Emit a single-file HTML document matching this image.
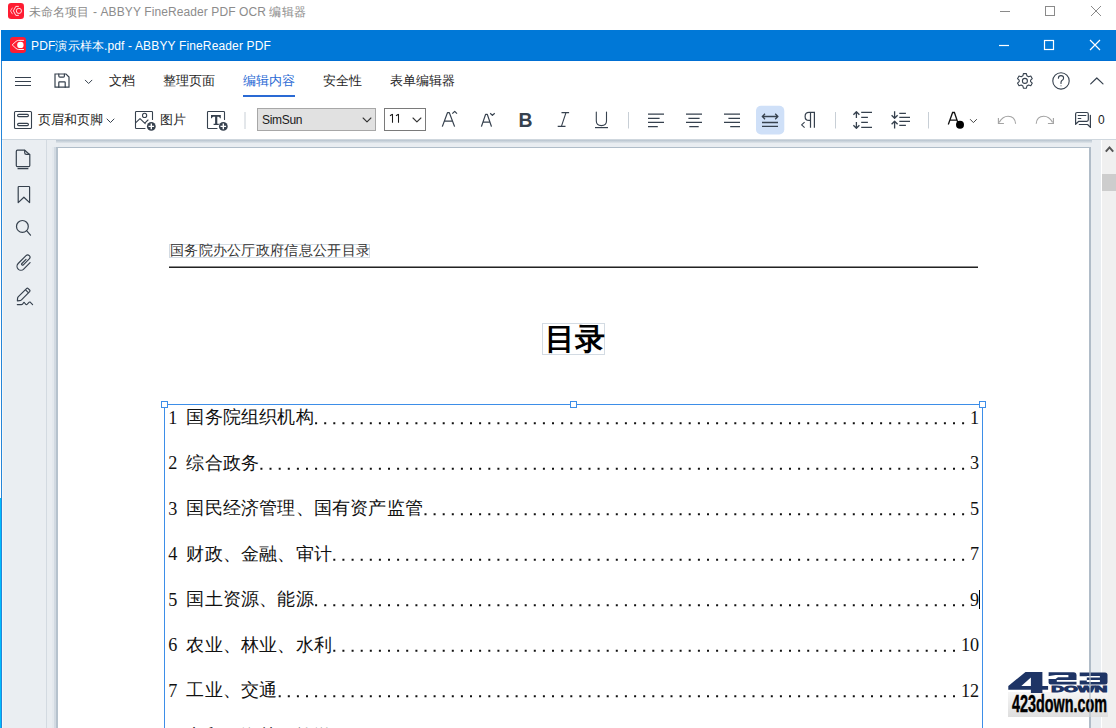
<!DOCTYPE html>
<html><head><meta charset="utf-8">
<style>
*{margin:0;padding:0;box-sizing:border-box}
html,body{width:1116px;height:728px;overflow:hidden;background:#fff;font-family:"Liberation Sans",sans-serif;}
.a{position:absolute}
.t{position:absolute;white-space:nowrap;line-height:1}
#ov{position:absolute;left:0;top:0;overflow:visible}
.menu{font-size:13px;color:#262626;top:74px}
.tb{font-size:13px;color:#262626;top:113px}
.doc{font-family:"Liberation Serif",serif;color:#111}
.dg{font-size:18.2px;color:#111}
.cj{font-size:18px;letter-spacing:0.2px;color:#111}
</style></head><body>

<!-- backgrounds -->
<div class="a" style="left:1px;top:30px;width:1115px;height:31px;background:#0078d7"></div>
<div class="a" style="left:1px;top:60px;width:1115px;height:1px;background:#006fd3"></div><div class="a" style="left:1px;top:61px;width:1px;height:667px;background:#2585d8"></div>
<div class="a" style="left:2px;top:139px;width:1114px;height:1px;background:#cfd7de"></div>
<div class="a" style="left:2px;top:140px;width:44px;height:588px;background:#eaeef2"></div><div class="a" style="left:2px;top:140px;width:1px;height:588px;background:#f6f7f8"></div><div class="a" style="left:0;top:498px;width:1px;height:230px;background:#00bdfd"></div>
<div class="a" style="left:46px;top:140px;width:1px;height:588px;background:#d3dae1"></div>
<div class="a" style="left:47px;top:140px;width:1055px;height:588px;background:#e9edf1"></div>
<div class="a" style="left:1101px;top:140px;width:1px;height:588px;background:#fff"></div><div class="a" style="left:1102px;top:140px;width:14px;height:588px;background:#f0f0f0"></div>
<div class="a" style="left:1102px;top:174px;width:14px;height:17px;background:#cdcdcd"></div>
<!-- page + shadow -->
<div class="a" style="left:56px;top:140px;width:1036px;height:3px;background:linear-gradient(#b8c4cf,#dfe5ea)"></div>
<div class="a" style="left:52px;top:147px;width:2px;height:581px;background:#e4e9ee"></div><div class="a" style="left:54px;top:147px;width:2px;height:581px;background:#d2dae2"></div>
<div class="a" style="left:56px;top:147px;width:1035px;height:600px;background:#fff;border-left:2px solid #b6c2cd;border-top:1px solid #b0bdc9;border-right:2px solid #b0bcc8"></div>

<!-- title texts -->
<div class="t" style="left:29px;top:6px;font-size:12px;color:#8c8c8c;letter-spacing:0.1px">未命名项目 - ABBYY FineReader PDF OCR 编辑器</div>
<div class="t" style="left:31px;top:40px;font-size:12px;color:#fff;letter-spacing:0.14px">PDF演示样本.pdf - ABBYY FineReader PDF</div>

<!-- menu -->
<div class="t menu" style="left:109px">文档</div>
<div class="t menu" style="left:163px">整理页面</div>
<div class="t menu" style="left:243px;color:#2a6ad4">编辑内容</div>
<div class="a" style="left:243px;top:95px;width:52px;height:2px;background:#2a6ad4"></div>
<div class="t menu" style="left:323px">安全性</div>
<div class="t menu" style="left:390px">表单编辑器</div>

<!-- toolbar -->
<div class="t tb" style="left:38px">页眉和页脚</div>
<div class="t tb" style="left:160px">图片</div>
<div class="a" style="left:257px;top:108px;width:119px;height:23px;background:#e1e1e1;border:1px solid #a7a7a7"></div>
<div class="t" style="left:262px;top:114px;font-size:12px;color:#1a1a1a;letter-spacing:-0.3px">SimSun</div>
<div class="a" style="left:384px;top:108px;width:42px;height:23px;background:#fff;border:1px solid #7a7a7a"></div>
<svg class="a" style="left:0;top:0" width="1116" height="728"><path d="M392.5 114 V122.8 M390 115.8 L392.5 114.2 M398.5 114 V122.8 M396 115.8 L398.5 114.2" stroke="#1a1a1a" stroke-width="1.05" fill="none"/></svg>
<div class="t" style="left:1098px;top:114px;font-size:12px;color:#1a1a1a">0</div>


<!-- document content -->
<div class="t doc" style="left:169px;top:244px;width:201px;height:14px;border:1px solid #d3dbe3"></div>
<div class="t doc" style="left:170px;top:244px;font-size:14px;color:#333;letter-spacing:0.3px">国务院办公厅政府信息公开目录</div>
<div class="a" style="left:169px;top:266px;width:809px;height:1px;background:#8c8c8c"></div><div class="a" style="left:169px;top:267px;width:809px;height:1px;background:#222"></div>
<div class="a" style="left:542px;top:323px;width:63px;height:32px;border:1px solid #d3dbe3"></div>
<div class="t doc" style="left:545px;top:324px;font-size:30px;font-weight:bold;color:#000">目录</div>
<!-- selection -->
<div class="a" style="left:164px;top:404px;width:819px;height:330px;border:1px solid #3d8ee8;border-bottom:none"></div>
<div class="a" style="left:161px;top:401px;width:7px;height:7px;border:1px solid #3d8ee8;background:#fff"></div>
<div class="a" style="left:570px;top:401px;width:7px;height:7px;border:1px solid #3d8ee8;background:#fff"></div>
<div class="a" style="left:979px;top:401px;width:7px;height:7px;border:1px solid #3d8ee8;background:#fff"></div>
<div class="a" style="left:979px;top:590px;width:1px;height:19px;background:#000"></div>
<div class="t doc dg" style="left:168.2px;top:408.8px">1</div>
<div class="t doc cj" style="left:186.4px;top:408.0px">国务院组织机构</div>
<div class="t doc dg" style="left:970.1px;top:408.8px">1</div>
<div class="t doc dg" style="left:168.2px;top:454.3px">2</div>
<div class="t doc cj" style="left:186.4px;top:453.5px">综合政务</div>
<div class="t doc dg" style="left:970.1px;top:454.3px">3</div>
<div class="t doc dg" style="left:168.2px;top:499.8px">3</div>
<div class="t doc cj" style="left:186.4px;top:499.0px">国民经济管理、国有资产监管</div>
<div class="t doc dg" style="left:970.1px;top:499.8px">5</div>
<div class="t doc dg" style="left:168.2px;top:545.3px">4</div>
<div class="t doc cj" style="left:186.4px;top:544.5px">财政、金融、审计</div>
<div class="t doc dg" style="left:970.1px;top:545.3px">7</div>
<div class="t doc dg" style="left:168.2px;top:590.8px">5</div>
<div class="t doc cj" style="left:186.4px;top:590.0px">国土资源、能源</div>
<div class="t doc dg" style="left:970.1px;top:590.8px">9</div>
<div class="t doc dg" style="left:168.2px;top:636.3px">6</div>
<div class="t doc cj" style="left:186.4px;top:635.5px">农业、林业、水利</div>
<div class="t doc dg" style="left:961.0px;top:636.3px">10</div>
<div class="t doc dg" style="left:168.2px;top:681.8px">7</div>
<div class="t doc cj" style="left:186.4px;top:681.0px">工业、交通</div>
<div class="t doc dg" style="left:961.0px;top:681.8px">12</div>
<div class="t doc dg" style="left:168.2px;top:727.3px">8</div>
<div class="t doc cj" style="left:186.4px;top:726.5px">商贸、海关、旅游</div>
<div class="t doc dg" style="left:961.0px;top:727.3px">15</div>
<svg class="a" style="left:0;top:0" width="1116" height="728"><path fill="#111" d="M315.1 422.2h2v2h-2zM324.2 422.2h2v2h-2zM333.3 422.2h2v2h-2zM342.4 422.2h2v2h-2zM351.6 422.2h2v2h-2zM360.7 422.2h2v2h-2zM369.8 422.2h2v2h-2zM378.9 422.2h2v2h-2zM388.0 422.2h2v2h-2zM397.1 422.2h2v2h-2zM406.2 422.2h2v2h-2zM415.4 422.2h2v2h-2zM424.5 422.2h2v2h-2zM433.6 422.2h2v2h-2zM442.7 422.2h2v2h-2zM451.8 422.2h2v2h-2zM460.9 422.2h2v2h-2zM470.0 422.2h2v2h-2zM479.1 422.2h2v2h-2zM488.3 422.2h2v2h-2zM497.4 422.2h2v2h-2zM506.5 422.2h2v2h-2zM515.6 422.2h2v2h-2zM524.7 422.2h2v2h-2zM533.8 422.2h2v2h-2zM542.9 422.2h2v2h-2zM552.0 422.2h2v2h-2zM561.2 422.2h2v2h-2zM570.3 422.2h2v2h-2zM579.4 422.2h2v2h-2zM588.5 422.2h2v2h-2zM597.6 422.2h2v2h-2zM606.7 422.2h2v2h-2zM615.8 422.2h2v2h-2zM624.9 422.2h2v2h-2zM634.1 422.2h2v2h-2zM643.2 422.2h2v2h-2zM652.3 422.2h2v2h-2zM661.4 422.2h2v2h-2zM670.5 422.2h2v2h-2zM679.6 422.2h2v2h-2zM688.7 422.2h2v2h-2zM697.9 422.2h2v2h-2zM707.0 422.2h2v2h-2zM716.1 422.2h2v2h-2zM725.2 422.2h2v2h-2zM734.3 422.2h2v2h-2zM743.4 422.2h2v2h-2zM752.5 422.2h2v2h-2zM761.6 422.2h2v2h-2zM770.8 422.2h2v2h-2zM779.9 422.2h2v2h-2zM789.0 422.2h2v2h-2zM798.1 422.2h2v2h-2zM807.2 422.2h2v2h-2zM816.3 422.2h2v2h-2zM825.4 422.2h2v2h-2zM834.5 422.2h2v2h-2zM843.7 422.2h2v2h-2zM852.8 422.2h2v2h-2zM861.9 422.2h2v2h-2zM871.0 422.2h2v2h-2zM880.1 422.2h2v2h-2zM889.2 422.2h2v2h-2zM898.3 422.2h2v2h-2zM907.5 422.2h2v2h-2zM916.6 422.2h2v2h-2zM925.7 422.2h2v2h-2zM934.8 422.2h2v2h-2zM943.9 422.2h2v2h-2zM953.0 422.2h2v2h-2zM962.1 422.2h2v2h-2zM260.4 467.7h2v2h-2zM269.5 467.7h2v2h-2zM278.7 467.7h2v2h-2zM287.8 467.7h2v2h-2zM296.9 467.7h2v2h-2zM306.0 467.7h2v2h-2zM315.1 467.7h2v2h-2zM324.2 467.7h2v2h-2zM333.3 467.7h2v2h-2zM342.4 467.7h2v2h-2zM351.6 467.7h2v2h-2zM360.7 467.7h2v2h-2zM369.8 467.7h2v2h-2zM378.9 467.7h2v2h-2zM388.0 467.7h2v2h-2zM397.1 467.7h2v2h-2zM406.2 467.7h2v2h-2zM415.4 467.7h2v2h-2zM424.5 467.7h2v2h-2zM433.6 467.7h2v2h-2zM442.7 467.7h2v2h-2zM451.8 467.7h2v2h-2zM460.9 467.7h2v2h-2zM470.0 467.7h2v2h-2zM479.1 467.7h2v2h-2zM488.3 467.7h2v2h-2zM497.4 467.7h2v2h-2zM506.5 467.7h2v2h-2zM515.6 467.7h2v2h-2zM524.7 467.7h2v2h-2zM533.8 467.7h2v2h-2zM542.9 467.7h2v2h-2zM552.0 467.7h2v2h-2zM561.2 467.7h2v2h-2zM570.3 467.7h2v2h-2zM579.4 467.7h2v2h-2zM588.5 467.7h2v2h-2zM597.6 467.7h2v2h-2zM606.7 467.7h2v2h-2zM615.8 467.7h2v2h-2zM624.9 467.7h2v2h-2zM634.1 467.7h2v2h-2zM643.2 467.7h2v2h-2zM652.3 467.7h2v2h-2zM661.4 467.7h2v2h-2zM670.5 467.7h2v2h-2zM679.6 467.7h2v2h-2zM688.7 467.7h2v2h-2zM697.9 467.7h2v2h-2zM707.0 467.7h2v2h-2zM716.1 467.7h2v2h-2zM725.2 467.7h2v2h-2zM734.3 467.7h2v2h-2zM743.4 467.7h2v2h-2zM752.5 467.7h2v2h-2zM761.6 467.7h2v2h-2zM770.8 467.7h2v2h-2zM779.9 467.7h2v2h-2zM789.0 467.7h2v2h-2zM798.1 467.7h2v2h-2zM807.2 467.7h2v2h-2zM816.3 467.7h2v2h-2zM825.4 467.7h2v2h-2zM834.5 467.7h2v2h-2zM843.7 467.7h2v2h-2zM852.8 467.7h2v2h-2zM861.9 467.7h2v2h-2zM871.0 467.7h2v2h-2zM880.1 467.7h2v2h-2zM889.2 467.7h2v2h-2zM898.3 467.7h2v2h-2zM907.5 467.7h2v2h-2zM916.6 467.7h2v2h-2zM925.7 467.7h2v2h-2zM934.8 467.7h2v2h-2zM943.9 467.7h2v2h-2zM953.0 467.7h2v2h-2zM962.1 467.7h2v2h-2zM424.5 513.2h2v2h-2zM433.6 513.2h2v2h-2zM442.7 513.2h2v2h-2zM451.8 513.2h2v2h-2zM460.9 513.2h2v2h-2zM470.0 513.2h2v2h-2zM479.1 513.2h2v2h-2zM488.3 513.2h2v2h-2zM497.4 513.2h2v2h-2zM506.5 513.2h2v2h-2zM515.6 513.2h2v2h-2zM524.7 513.2h2v2h-2zM533.8 513.2h2v2h-2zM542.9 513.2h2v2h-2zM552.0 513.2h2v2h-2zM561.2 513.2h2v2h-2zM570.3 513.2h2v2h-2zM579.4 513.2h2v2h-2zM588.5 513.2h2v2h-2zM597.6 513.2h2v2h-2zM606.7 513.2h2v2h-2zM615.8 513.2h2v2h-2zM624.9 513.2h2v2h-2zM634.1 513.2h2v2h-2zM643.2 513.2h2v2h-2zM652.3 513.2h2v2h-2zM661.4 513.2h2v2h-2zM670.5 513.2h2v2h-2zM679.6 513.2h2v2h-2zM688.7 513.2h2v2h-2zM697.9 513.2h2v2h-2zM707.0 513.2h2v2h-2zM716.1 513.2h2v2h-2zM725.2 513.2h2v2h-2zM734.3 513.2h2v2h-2zM743.4 513.2h2v2h-2zM752.5 513.2h2v2h-2zM761.6 513.2h2v2h-2zM770.8 513.2h2v2h-2zM779.9 513.2h2v2h-2zM789.0 513.2h2v2h-2zM798.1 513.2h2v2h-2zM807.2 513.2h2v2h-2zM816.3 513.2h2v2h-2zM825.4 513.2h2v2h-2zM834.5 513.2h2v2h-2zM843.7 513.2h2v2h-2zM852.8 513.2h2v2h-2zM861.9 513.2h2v2h-2zM871.0 513.2h2v2h-2zM880.1 513.2h2v2h-2zM889.2 513.2h2v2h-2zM898.3 513.2h2v2h-2zM907.5 513.2h2v2h-2zM916.6 513.2h2v2h-2zM925.7 513.2h2v2h-2zM934.8 513.2h2v2h-2zM943.9 513.2h2v2h-2zM953.0 513.2h2v2h-2zM962.1 513.2h2v2h-2zM333.3 558.7h2v2h-2zM342.4 558.7h2v2h-2zM351.6 558.7h2v2h-2zM360.7 558.7h2v2h-2zM369.8 558.7h2v2h-2zM378.9 558.7h2v2h-2zM388.0 558.7h2v2h-2zM397.1 558.7h2v2h-2zM406.2 558.7h2v2h-2zM415.4 558.7h2v2h-2zM424.5 558.7h2v2h-2zM433.6 558.7h2v2h-2zM442.7 558.7h2v2h-2zM451.8 558.7h2v2h-2zM460.9 558.7h2v2h-2zM470.0 558.7h2v2h-2zM479.1 558.7h2v2h-2zM488.3 558.7h2v2h-2zM497.4 558.7h2v2h-2zM506.5 558.7h2v2h-2zM515.6 558.7h2v2h-2zM524.7 558.7h2v2h-2zM533.8 558.7h2v2h-2zM542.9 558.7h2v2h-2zM552.0 558.7h2v2h-2zM561.2 558.7h2v2h-2zM570.3 558.7h2v2h-2zM579.4 558.7h2v2h-2zM588.5 558.7h2v2h-2zM597.6 558.7h2v2h-2zM606.7 558.7h2v2h-2zM615.8 558.7h2v2h-2zM624.9 558.7h2v2h-2zM634.1 558.7h2v2h-2zM643.2 558.7h2v2h-2zM652.3 558.7h2v2h-2zM661.4 558.7h2v2h-2zM670.5 558.7h2v2h-2zM679.6 558.7h2v2h-2zM688.7 558.7h2v2h-2zM697.9 558.7h2v2h-2zM707.0 558.7h2v2h-2zM716.1 558.7h2v2h-2zM725.2 558.7h2v2h-2zM734.3 558.7h2v2h-2zM743.4 558.7h2v2h-2zM752.5 558.7h2v2h-2zM761.6 558.7h2v2h-2zM770.8 558.7h2v2h-2zM779.9 558.7h2v2h-2zM789.0 558.7h2v2h-2zM798.1 558.7h2v2h-2zM807.2 558.7h2v2h-2zM816.3 558.7h2v2h-2zM825.4 558.7h2v2h-2zM834.5 558.7h2v2h-2zM843.7 558.7h2v2h-2zM852.8 558.7h2v2h-2zM861.9 558.7h2v2h-2zM871.0 558.7h2v2h-2zM880.1 558.7h2v2h-2zM889.2 558.7h2v2h-2zM898.3 558.7h2v2h-2zM907.5 558.7h2v2h-2zM916.6 558.7h2v2h-2zM925.7 558.7h2v2h-2zM934.8 558.7h2v2h-2zM943.9 558.7h2v2h-2zM953.0 558.7h2v2h-2zM962.1 558.7h2v2h-2zM315.1 604.2h2v2h-2zM324.2 604.2h2v2h-2zM333.3 604.2h2v2h-2zM342.4 604.2h2v2h-2zM351.6 604.2h2v2h-2zM360.7 604.2h2v2h-2zM369.8 604.2h2v2h-2zM378.9 604.2h2v2h-2zM388.0 604.2h2v2h-2zM397.1 604.2h2v2h-2zM406.2 604.2h2v2h-2zM415.4 604.2h2v2h-2zM424.5 604.2h2v2h-2zM433.6 604.2h2v2h-2zM442.7 604.2h2v2h-2zM451.8 604.2h2v2h-2zM460.9 604.2h2v2h-2zM470.0 604.2h2v2h-2zM479.1 604.2h2v2h-2zM488.3 604.2h2v2h-2zM497.4 604.2h2v2h-2zM506.5 604.2h2v2h-2zM515.6 604.2h2v2h-2zM524.7 604.2h2v2h-2zM533.8 604.2h2v2h-2zM542.9 604.2h2v2h-2zM552.0 604.2h2v2h-2zM561.2 604.2h2v2h-2zM570.3 604.2h2v2h-2zM579.4 604.2h2v2h-2zM588.5 604.2h2v2h-2zM597.6 604.2h2v2h-2zM606.7 604.2h2v2h-2zM615.8 604.2h2v2h-2zM624.9 604.2h2v2h-2zM634.1 604.2h2v2h-2zM643.2 604.2h2v2h-2zM652.3 604.2h2v2h-2zM661.4 604.2h2v2h-2zM670.5 604.2h2v2h-2zM679.6 604.2h2v2h-2zM688.7 604.2h2v2h-2zM697.9 604.2h2v2h-2zM707.0 604.2h2v2h-2zM716.1 604.2h2v2h-2zM725.2 604.2h2v2h-2zM734.3 604.2h2v2h-2zM743.4 604.2h2v2h-2zM752.5 604.2h2v2h-2zM761.6 604.2h2v2h-2zM770.8 604.2h2v2h-2zM779.9 604.2h2v2h-2zM789.0 604.2h2v2h-2zM798.1 604.2h2v2h-2zM807.2 604.2h2v2h-2zM816.3 604.2h2v2h-2zM825.4 604.2h2v2h-2zM834.5 604.2h2v2h-2zM843.7 604.2h2v2h-2zM852.8 604.2h2v2h-2zM861.9 604.2h2v2h-2zM871.0 604.2h2v2h-2zM880.1 604.2h2v2h-2zM889.2 604.2h2v2h-2zM898.3 604.2h2v2h-2zM907.5 604.2h2v2h-2zM916.6 604.2h2v2h-2zM925.7 604.2h2v2h-2zM934.8 604.2h2v2h-2zM943.9 604.2h2v2h-2zM953.0 604.2h2v2h-2zM962.1 604.2h2v2h-2zM333.3 649.7h2v2h-2zM342.4 649.7h2v2h-2zM351.6 649.7h2v2h-2zM360.7 649.7h2v2h-2zM369.8 649.7h2v2h-2zM378.9 649.7h2v2h-2zM388.0 649.7h2v2h-2zM397.1 649.7h2v2h-2zM406.2 649.7h2v2h-2zM415.4 649.7h2v2h-2zM424.5 649.7h2v2h-2zM433.6 649.7h2v2h-2zM442.7 649.7h2v2h-2zM451.8 649.7h2v2h-2zM460.9 649.7h2v2h-2zM470.0 649.7h2v2h-2zM479.1 649.7h2v2h-2zM488.3 649.7h2v2h-2zM497.4 649.7h2v2h-2zM506.5 649.7h2v2h-2zM515.6 649.7h2v2h-2zM524.7 649.7h2v2h-2zM533.8 649.7h2v2h-2zM542.9 649.7h2v2h-2zM552.0 649.7h2v2h-2zM561.2 649.7h2v2h-2zM570.3 649.7h2v2h-2zM579.4 649.7h2v2h-2zM588.5 649.7h2v2h-2zM597.6 649.7h2v2h-2zM606.7 649.7h2v2h-2zM615.8 649.7h2v2h-2zM624.9 649.7h2v2h-2zM634.1 649.7h2v2h-2zM643.2 649.7h2v2h-2zM652.3 649.7h2v2h-2zM661.4 649.7h2v2h-2zM670.5 649.7h2v2h-2zM679.6 649.7h2v2h-2zM688.7 649.7h2v2h-2zM697.9 649.7h2v2h-2zM707.0 649.7h2v2h-2zM716.1 649.7h2v2h-2zM725.2 649.7h2v2h-2zM734.3 649.7h2v2h-2zM743.4 649.7h2v2h-2zM752.5 649.7h2v2h-2zM761.6 649.7h2v2h-2zM770.8 649.7h2v2h-2zM779.9 649.7h2v2h-2zM789.0 649.7h2v2h-2zM798.1 649.7h2v2h-2zM807.2 649.7h2v2h-2zM816.3 649.7h2v2h-2zM825.4 649.7h2v2h-2zM834.5 649.7h2v2h-2zM843.7 649.7h2v2h-2zM852.8 649.7h2v2h-2zM861.9 649.7h2v2h-2zM871.0 649.7h2v2h-2zM880.1 649.7h2v2h-2zM889.2 649.7h2v2h-2zM898.3 649.7h2v2h-2zM907.5 649.7h2v2h-2zM916.6 649.7h2v2h-2zM925.7 649.7h2v2h-2zM934.8 649.7h2v2h-2zM943.9 649.7h2v2h-2zM953.0 649.7h2v2h-2zM278.7 695.2h2v2h-2zM287.8 695.2h2v2h-2zM296.9 695.2h2v2h-2zM306.0 695.2h2v2h-2zM315.1 695.2h2v2h-2zM324.2 695.2h2v2h-2zM333.3 695.2h2v2h-2zM342.4 695.2h2v2h-2zM351.6 695.2h2v2h-2zM360.7 695.2h2v2h-2zM369.8 695.2h2v2h-2zM378.9 695.2h2v2h-2zM388.0 695.2h2v2h-2zM397.1 695.2h2v2h-2zM406.2 695.2h2v2h-2zM415.4 695.2h2v2h-2zM424.5 695.2h2v2h-2zM433.6 695.2h2v2h-2zM442.7 695.2h2v2h-2zM451.8 695.2h2v2h-2zM460.9 695.2h2v2h-2zM470.0 695.2h2v2h-2zM479.1 695.2h2v2h-2zM488.3 695.2h2v2h-2zM497.4 695.2h2v2h-2zM506.5 695.2h2v2h-2zM515.6 695.2h2v2h-2zM524.7 695.2h2v2h-2zM533.8 695.2h2v2h-2zM542.9 695.2h2v2h-2zM552.0 695.2h2v2h-2zM561.2 695.2h2v2h-2zM570.3 695.2h2v2h-2zM579.4 695.2h2v2h-2zM588.5 695.2h2v2h-2zM597.6 695.2h2v2h-2zM606.7 695.2h2v2h-2zM615.8 695.2h2v2h-2zM624.9 695.2h2v2h-2zM634.1 695.2h2v2h-2zM643.2 695.2h2v2h-2zM652.3 695.2h2v2h-2zM661.4 695.2h2v2h-2zM670.5 695.2h2v2h-2zM679.6 695.2h2v2h-2zM688.7 695.2h2v2h-2zM697.9 695.2h2v2h-2zM707.0 695.2h2v2h-2zM716.1 695.2h2v2h-2zM725.2 695.2h2v2h-2zM734.3 695.2h2v2h-2zM743.4 695.2h2v2h-2zM752.5 695.2h2v2h-2zM761.6 695.2h2v2h-2zM770.8 695.2h2v2h-2zM779.9 695.2h2v2h-2zM789.0 695.2h2v2h-2zM798.1 695.2h2v2h-2zM807.2 695.2h2v2h-2zM816.3 695.2h2v2h-2zM825.4 695.2h2v2h-2zM834.5 695.2h2v2h-2zM843.7 695.2h2v2h-2zM852.8 695.2h2v2h-2zM861.9 695.2h2v2h-2zM871.0 695.2h2v2h-2zM880.1 695.2h2v2h-2zM889.2 695.2h2v2h-2zM898.3 695.2h2v2h-2zM907.5 695.2h2v2h-2zM916.6 695.2h2v2h-2zM925.7 695.2h2v2h-2zM934.8 695.2h2v2h-2zM943.9 695.2h2v2h-2zM953.0 695.2h2v2h-2zM333.3 740.7h2v2h-2zM342.4 740.7h2v2h-2zM351.6 740.7h2v2h-2zM360.7 740.7h2v2h-2zM369.8 740.7h2v2h-2zM378.9 740.7h2v2h-2zM388.0 740.7h2v2h-2zM397.1 740.7h2v2h-2zM406.2 740.7h2v2h-2zM415.4 740.7h2v2h-2zM424.5 740.7h2v2h-2zM433.6 740.7h2v2h-2zM442.7 740.7h2v2h-2zM451.8 740.7h2v2h-2zM460.9 740.7h2v2h-2zM470.0 740.7h2v2h-2zM479.1 740.7h2v2h-2zM488.3 740.7h2v2h-2zM497.4 740.7h2v2h-2zM506.5 740.7h2v2h-2zM515.6 740.7h2v2h-2zM524.7 740.7h2v2h-2zM533.8 740.7h2v2h-2zM542.9 740.7h2v2h-2zM552.0 740.7h2v2h-2zM561.2 740.7h2v2h-2zM570.3 740.7h2v2h-2zM579.4 740.7h2v2h-2zM588.5 740.7h2v2h-2zM597.6 740.7h2v2h-2zM606.7 740.7h2v2h-2zM615.8 740.7h2v2h-2zM624.9 740.7h2v2h-2zM634.1 740.7h2v2h-2zM643.2 740.7h2v2h-2zM652.3 740.7h2v2h-2zM661.4 740.7h2v2h-2zM670.5 740.7h2v2h-2zM679.6 740.7h2v2h-2zM688.7 740.7h2v2h-2zM697.9 740.7h2v2h-2zM707.0 740.7h2v2h-2zM716.1 740.7h2v2h-2zM725.2 740.7h2v2h-2zM734.3 740.7h2v2h-2zM743.4 740.7h2v2h-2zM752.5 740.7h2v2h-2zM761.6 740.7h2v2h-2zM770.8 740.7h2v2h-2zM779.9 740.7h2v2h-2zM789.0 740.7h2v2h-2zM798.1 740.7h2v2h-2zM807.2 740.7h2v2h-2zM816.3 740.7h2v2h-2zM825.4 740.7h2v2h-2zM834.5 740.7h2v2h-2zM843.7 740.7h2v2h-2zM852.8 740.7h2v2h-2zM861.9 740.7h2v2h-2zM871.0 740.7h2v2h-2zM880.1 740.7h2v2h-2zM889.2 740.7h2v2h-2zM898.3 740.7h2v2h-2zM907.5 740.7h2v2h-2zM916.6 740.7h2v2h-2zM925.7 740.7h2v2h-2zM934.8 740.7h2v2h-2zM943.9 740.7h2v2h-2zM953.0 740.7h2v2h-2z"/></svg>


<!-- watermark -->
<div class="a" style="left:1008px;top:692px;width:100px;height:25px;background:linear-gradient(#f6f6f6,#dedede)"></div>
<svg class="a" style="left:0;top:0" width="1116" height="728">
 <path fill="#1e3465" d="M1025.5 672 H1042.4 V685.9 H1048.1 V689.7 H1042.4 V693 H1030.9 V689.7 H1008.3 V685.9 Z M1021.3 685.9 H1030.9 V677.6 Z" fill-rule="evenodd"/>
 <path fill="#1e3465" d="M1048.6 672.2 H1073.5 Q1076.5 672.2 1076.5 675.2 V684.6 H1050.6 Q1048.6 684.6 1048.6 682.6 Z"/>
 <path fill="#fff" d="M1046 676.6 L1055.8 675.1 H1068.4 V677.2 H1058 L1055.5 679.1 H1046 Z M1056.8 680.1 H1078 V681.8 H1056.8 Z"/>
 <path fill="#1e3465" d="M1079.7 672.5 H1105 Q1107.5 672.5 1107.5 675 V682.1 Q1107.5 684.6 1105 684.6 H1079.7 Z"/>
 <path fill="#fff" d="M1078 676.3 H1086.8 V675.9 H1099.9 V677.4 H1086.8 V680 H1099.9 V682 H1086.8 V680.6 H1078 Z"/>
 <text x="1051.3" y="692.3" font-family="Liberation Sans" font-weight="bold" font-size="8.6" fill="#1e3465" stroke="#1e3465" stroke-width="0.9" textLength="56" lengthAdjust="spacingAndGlyphs">DOWN</text>
 <text x="1012" y="711.6" font-family="Liberation Sans" font-weight="bold" font-size="23.6" fill="#000" stroke="#000" stroke-width="0.5" textLength="95" lengthAdjust="spacingAndGlyphs">423down.com</text>
 <rect x="1089" y="660" width="2" height="68" fill="#b0bcc8" opacity="0.6"/>
</svg>
<svg id="ov" width="1116" height="728" viewBox="0 0 1116 728">
 <!-- outer app icon -->
 <rect x="8" y="3" width="16" height="16" rx="3.2" fill="#fe1c32"/>
 <path d="M18.8 6.4 H15.8 L13.4 10.9 L15.8 15.4 H18.8" stroke="#fff" stroke-width="0.85" fill="none" stroke-linejoin="round"/>
 <path d="M12.5 7.7 L10.5 10.9 L12.5 14.2" stroke="#fff" stroke-width="0.75" fill="none" stroke-linejoin="round" opacity="0.9"/>
 <circle cx="18.9" cy="10.9" r="2.6" stroke="#fff" stroke-width="0.85" fill="none"/>
 <!-- outer window controls -->
 <g stroke="#8a8a8a" stroke-width="1" fill="none">
  <path d="M1000 11.5 H1010"/>
  <rect x="1045.5" y="6.5" width="9" height="9"/>
  <path d="M1091 6 L1101 16 M1101 6 L1091 16"/>
 </g>
 <!-- inner app icon -->
 <rect x="10" y="37" width="16" height="16" rx="3.2" fill="#fe1c32"/>
 <path d="M23.9 40.4 H18.6 Q17.2 40.4 16 41.4 L12.2 44.9 L16 48.4 Q17.2 49.5 18.6 49.5 H23.9" stroke="#fff" stroke-width="0.9" fill="none" stroke-linejoin="round"/>
 <circle cx="20.4" cy="44.9" r="3.2" fill="#fff"/>
 <!-- inner window controls -->
 <g stroke="#fff" stroke-width="1.2" fill="none">
  <path d="M999 45.5 H1009"/>
  <rect x="1044.5" y="40.5" width="9" height="9"/>
  <path d="M1090 40 L1100 50 M1100 40 L1090 50"/>
 </g>

 <g stroke="#36414e" stroke-width="1.2" fill="none" stroke-linecap="round" stroke-linejoin="round">
  <!-- hamburger -->
  <path d="M15 77.5 H31 M15 81.5 H31 M15 85.5 H31" stroke-linecap="butt"/>
  <!-- save -->
  <path d="M55 74 H66 L69 77 V87.1 H55 Z" stroke-linejoin="miter"/>
  <path d="M58.8 74 V76 Q58.8 77.2 60 77.2 H63.4 Q64.4 77.2 64.4 76 V74"/>
  <path d="M58.8 87.2 V82.4 Q58.8 81.8 59.4 81.8 H64.6 Q65.2 81.8 65.2 82.4 V87.2"/>
  <path d="M85.3 80.2 L88.6 83.5 L91.9 80.2" stroke-width="1"/>
  <!-- gear -->
  <path d="M1023.4 73.6 H1026.4 L1026.9 75.8 L1028.6 76.8 L1030.8 76.1 L1032.3 78.7 L1030.6 80.2 V81.6 L1032.3 83.1 L1030.8 85.7 L1028.6 85 L1026.9 86 L1026.4 88.2 H1023.4 L1022.9 86 L1021.2 85 L1019 85.7 L1017.5 83.1 L1019.2 81.6 V80.2 L1017.5 78.7 L1019 76.1 L1021.2 76.8 L1022.9 75.8 Z" stroke-width="1.1"/>
  <circle cx="1024.9" cy="80.9" r="2.5" stroke-width="1.1"/>
  <!-- help -->
  <circle cx="1061" cy="80.9" r="8.2" stroke-width="1.1"/>
  <path d="M1058.4 78.3 Q1058.4 75.6 1061 75.6 Q1063.6 75.6 1063.6 78 Q1063.6 79.6 1061.9 80.5 Q1061 81.1 1061 82.6 V83.4" stroke-width="1.1"/>
  <circle cx="1061" cy="85.8" r="0.5" fill="#36414e" stroke="none"/>
  <!-- caret up -->
  <path d="M1090.7 83.9 L1096.8 78 L1103 83.9" stroke-width="1.2"/>

  <!-- header/footer icon -->
  <rect x="14.5" y="111.5" width="17" height="17" rx="1" stroke-width="1.1"/>
  <rect x="17.6" y="114.4" width="10.8" height="2.2" rx="1.1"/>
  <rect x="17.6" y="123.4" width="10.8" height="2.2" rx="1.1"/>
  <path d="M107 119 L110.5 122.5 L114 119" stroke-width="1"/>
  <!-- image icon -->
  <path d="M152.5 119.5 V112.3 Q152.5 111.5 151.7 111.5 H136.3 Q135.5 111.5 135.5 112.3 V127.7 Q135.5 128.5 136.3 128.5 H145" stroke-width="1.1"/>
  <circle cx="144.6" cy="115.4" r="2.1" stroke-width="1.1"/>
  <path d="M135.8 122.6 L140 118.6 L145.2 123.6 M144.8 123.2 L148 120" stroke-width="1.1"/>
  <circle cx="151.3" cy="126.4" r="4.4" fill="#36414e" stroke="none"/>
  <path d="M151.3 123.6 V129.2 M148.5 126.4 H154.1" stroke="#fff" stroke-width="1.4" stroke-linecap="butt"/>
  <!-- T icon -->
  <path d="M224.5 119.5 V112.3 Q224.5 111.5 223.7 111.5 H208.3 Q207.5 111.5 207.5 112.3 V127.7 Q207.5 128.5 208.3 128.5 H217" stroke-width="1.1"/>
  <path d="M211 115 H220.8 V118.2 H219.9 Q219.7 116.7 218.6 116.7 H217.3 V123.8 H218.8 V124.9 H213.6 V123.8 H215.1 V116.7 H213.2 Q212.1 116.7 211.9 118.2 H211 Z" fill="#36414e" stroke="none"/>
  <circle cx="223.3" cy="126.4" r="4.4" fill="#36414e" stroke="none"/>
  <path d="M223.3 123.6 V129.2 M220.5 126.4 H226.1" stroke="#fff" stroke-width="1.4" stroke-linecap="butt"/>
  <!-- separators -->
  <path d="M245 112 V129 M628.5 112 V128.5 M835.5 112 V128.5 M928.5 112 V128.5" stroke="#c8cfd6" stroke-width="1" stroke-linecap="butt"/>
  <!-- dropdown chevrons -->
  <path d="M363.1 118 L367 121.8 L370.9 118" stroke="#333" stroke-width="1.1"/>
  <path d="M413 118 L416.9 121.8 L420.9 118" stroke="#333" stroke-width="1.1"/>
  <!-- A^ -->
  <path d="M442.3 126.6 L447.5 112.6 H449.3 L454.6 126.6 M444.3 121 H452.6 M452.3 113.6 L454.7 111.4 L457 113.6" stroke-width="1.25" stroke-linecap="butt"/>
  <!-- A v -->
  <path d="M481.4 126.6 L485.6 114.4 H487.3 L491.5 126.6 M483.2 122.1 H489.8 M490.2 113.3 L492.4 115.4 L494.7 113.3" stroke-width="1.25" stroke-linecap="butt"/>
  <!-- I -->
  <path d="M561.5 112.6 H569.1 M557.7 126.4 H565.5 M566 112.6 L561.4 126.4" stroke-width="1.1" stroke-linecap="butt"/>
  <!-- U -->
  <path d="M596.3 112.1 V121 Q596.3 125.6 601.4 125.6 Q606.5 125.6 606.5 121 V112.1" stroke-width="1.1"/>
  <path d="M595 127.6 H608" stroke-width="1.2" stroke-linecap="butt"/>
  <!-- align left/center/right -->
  <g stroke-width="1.25" stroke-linecap="butt">
   <path d="M648 114 H664 M648 118.3 H659.6 M648 122.4 H664 M648 126.5 H657.8"/>
   <path d="M686 114 H702 M688.4 118.3 H699.6 M686 122.4 H702 M689.3 126.5 H698.7"/>
   <path d="M724 114 H740 M728.4 118.3 H740 M724 122.4 H740 M730.2 126.5 H740"/>
  </g>
 </g>
 <!-- justify selected -->
 <rect x="756" y="105.8" width="28.3" height="28.6" rx="5" fill="#cfe0f8"/>
 <g stroke="#36414e" stroke-width="1.3" fill="none" stroke-linecap="butt" stroke-linejoin="round">
  <path d="M762.4 116.5 H777.8 M765 113.8 L762.3 116.5 L765 119.2 M775.2 113.8 L777.9 116.5 L775.2 119.2"/>
  <path d="M762 122.5 H778 M762 126.4 H778"/>
  <!-- pilcrow -->
  <path d="M810.5 112.4 V127.7 M814.4 112.4 V127.7 M815 112.4 H809 Q805.1 112.4 805.1 116.4 Q805.1 120.4 809 120.4 H810.5" stroke-width="1.2"/>
  <path d="M804.6 122.2 L801.6 124.9 L804.6 127.6" stroke-width="1.1"/>
  <!-- line spacing -->
  <path d="M856.4 111.8 V118 M853.4 114.8 L856.4 111.8 L859.4 114.8 M856.4 122 V128.3 M853.4 125.3 L856.4 128.3 L859.4 125.3"/>
  <path d="M861.2 112.3 H872 M861.2 117.4 H867.9 M861.2 122.4 H867.9 M861.2 127.3 H872"/>
  <!-- para spacing -->
  <path d="M894.6 111.3 V118.3 M891.6 115.3 L894.6 118.3 L897.6 115.3 M894.6 121.2 V128.5 M891.6 124.2 L894.6 121.2 L897.6 124.2"/>
  <path d="M899.3 113.4 H905.9 M899.3 117.4 H910 M899.3 121.4 H910 M899.3 125.4 H905.9"/>
  <!-- font color chevron -->
  <path d="M970.1 119.2 L973.4 122.6 L976.8 119.2" stroke-width="1" stroke="#444"/>
 </g>
 <!-- font color A -->
 <path d="M948.3 124.5 L952.6 112.5 H954.4 L958.5 124.5 M950.1 120.2 H957.3" stroke="#111" stroke-width="1.3" fill="none"/>
 <circle cx="960" cy="124.8" r="4" fill="#000"/>
 <!-- B -->
 <text x="518.6" y="126.8" font-family="Liberation Sans" font-weight="bold" font-size="19.4" fill="#36414e">B</text>
 <!-- undo / redo -->
 <g stroke="#a3a3a3" stroke-width="1.1" fill="none" stroke-linecap="butt">
  <path d="M1015.6 123.8 Q1015 116.3 1008 116.3 Q1002.8 116.3 999.2 122.4"/>
  <path d="M998.4 117.9 V123.5 H1003.9"/>
  <path d="M1036.2 123.8 Q1036.8 116.3 1043.8 116.3 Q1049 116.3 1052.6 122.4"/>
  <path d="M1053.4 117.9 V123.5 H1047.9"/>
 </g>
 <!-- comment -->
 <g stroke="#36414e" stroke-width="1.2" fill="none" stroke-linecap="round" stroke-linejoin="round">
  <path d="M1075.6 124.3 V114 Q1075.6 112.5 1077.1 112.5 H1086.8 Q1088.3 112.5 1088.3 114 V119.8 Q1088.3 121.3 1086.8 121.3 H1078.8 Z"/>
  <path d="M1078.2 115.5 H1085.8 M1078.2 118.5 H1080.8"/>
  <path d="M1090.4 115.3 V127.4 L1087.6 124.5 H1079.3"/>
 </g>

 <!-- sidebar icons -->
 <g stroke="#36414e" stroke-width="1.2" fill="none" stroke-linecap="round" stroke-linejoin="round">
  <path d="M16.3 151.4 Q16.3 150.2 17.5 150.2 H24.7 L29.8 154.8 V165.4 Q29.8 166.6 28.6 166.6 H17.5 Q16.3 166.6 16.3 165.4 Z"/>
  <path d="M24.7 150.4 V152.7 Q24.7 154.4 26.4 154.4 H29.6"/>
  <path d="M18 168.7 H27.9"/>
  <path d="M18.2 202.6 V187.2 Q18.2 186.5 18.9 186.5 H28.9 Q29.6 186.5 29.6 187.2 V202.6 L23.9 197.2 Z"/>
  <circle cx="22.4" cy="226.4" r="5.9"/>
  <path d="M26.6 230.6 L30.5 235.2"/>
  <path transform="matrix(0.7071,-0.7071,0.7071,0.7071,0,0)" d="M-164.5 207 L-173.5 207 A3.9 3.9 0 0 1 -173.5 199.2 L-162.4 199.2 A2.3 2.3 0 0 1 -162.4 203.8 L-170.8 203.8 A1 1 0 0 1 -170.8 201.8 L-165 201.8"/>
  <path transform="matrix(0.7071,-0.7071,0.7071,0.7071,0,0)" d="M-184.1 224 Q-184.1 222.8 -185.3 222.8 L-196.8 222.8 Q-198 222.8 -198.8 223.6 L-200.4 225 L-198.8 226.4 Q-198 227.2 -196.8 227.2 L-185.3 227.2 Q-184.1 227.2 -184.1 226 Z M-186.9 222.8 V227.2"/>
  <path d="M17.3 304.6 H21.4 Q22.6 304.6 23.4 303 Q24 301.8 24.7 303 L25.6 304.2 Q26.4 305 27.3 304.1 L29.2 302.2 Q30 301.6 30.7 302.6 L32.6 304.6" stroke-width="1.15"/>
 </g>
 <!-- scrollbar arrow -->
 <path d="M1105.8 151.6 L1109.5 147.4 L1113.2 151.6" stroke="#555" stroke-width="2" fill="none"/>
</svg>

</body></html>
